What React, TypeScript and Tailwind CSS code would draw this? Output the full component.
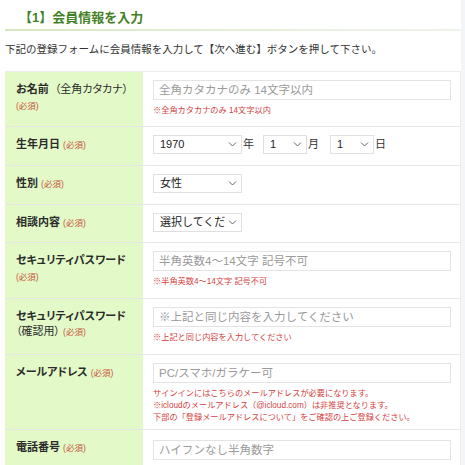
import React from 'react'

const font = { fontFamily: '"Liberation Sans", "Noto Sans CJK JP", sans-serif' }

function Req() {
  return <span className="text-[8.5px] font-normal text-[#c8553f]">(必須)</span>
}

function Hint({ children }: { children: React.ReactNode }) {
  return <p className="mt-[5px] text-[8.2px] leading-[12px] text-[#d33f3f]">{children}</p>
}

function TextInput({ placeholder }: { placeholder: string }) {
  return (
    <input
      type="text"
      placeholder={placeholder}
      className="block h-[20px] w-full border border-[#e3e3e3] bg-white px-[5px] text-[11.5px] text-[#333] placeholder:text-[#9a9a9a] outline-none"
    />
  )
}

function Select({ value, width }: { value: string; width: string }) {
  return (
    <div className={`relative h-[19px] ${width} border border-[#e0e0e0] bg-white`}>
      <div className="flex h-full w-[calc(100%-14px)] items-center overflow-hidden whitespace-nowrap pl-[6px] text-[11px] text-[#222]">
        {value}
      </div>
      <svg
        className="absolute right-[4px] top-[5px]"
        width="9"
        height="7"
        viewBox="0 0 9 7"
        fill="none"
        stroke="#666"
        strokeWidth="1"
      >
        <path d="M1 1.5 L4.5 5 L8 1.5" />
      </svg>
    </div>
  )
}

function Row({
  label,
  children,
  height,
}: {
  label: React.ReactNode
  children: React.ReactNode
  height: string
}) {
  return (
    <div className={`flex ${height} border-b border-[#e6e6e6]`}>
      <div className="w-[138px] shrink-0 bg-[#e3fac8] pl-[11px] pt-[10px] text-[11px] font-bold leading-[15px] text-[#2b2b2b] [font-feature-settings:'palt']">
        {label}
      </div>
      <div className="flex-1 pl-[10px] pr-[9px] pt-[8px]">{children}</div>
    </div>
  )
}

export default function App() {
  return (
    <div className="flex h-[465px] w-[465px] overflow-hidden bg-white" style={font}>
      <div className="w-[461px] pl-[5px]">
        {/* Title */}
        <div className="pt-[9px]">
          <h2 className="pl-[14px] text-[13px] font-bold leading-[18px] text-[#437f26]">【1】会員情報を入力</h2>
          <div className="mt-[2px] h-[2px] bg-gradient-to-r from-[#d6e6c2] via-[#e6eedb] to-[#eef2ea]" />
        </div>

        <p className="mt-[11px] text-[10.5px] leading-[14px] text-[#333]">
          下記の登録フォームに会員情報を入力して【次へ進む】ボタンを押して下さい。
        </p>

        {/* Form table */}
        <div className="mt-[15px] border-t border-r border-[#ececec]">
          <Row
            height="h-[55px]"
            label={
              <>
                <div>
                  お名前 <span className="font-normal">&nbsp;（全角カタカナ）</span>
                </div>
                <div className="mt-[1px]">
                  <Req />
                </div>
              </>
            }
          >
            <TextInput placeholder="全角カタカナのみ 14文字以内" />
            <Hint>※全角カタカナのみ 14文字以内</Hint>
          </Row>

          <Row
            height="h-[39px]"
            label={
              <>
                生年月日 <Req />
              </>
            }
          >
            <div className="flex items-center text-[11px] text-[#333]">
              <Select value="1970" width="w-[89px]" />
              <span className="ml-[1px] w-[20px]">年</span>
              <Select value="1" width="w-[44px]" />
              <span className="ml-[1px] w-[22px]">月</span>
              <Select value="1" width="w-[44px]" />
              <span className="ml-[1px]">日</span>
            </div>
          </Row>

          <Row
            height="h-[39px]"
            label={
              <>
                性別 <Req />
              </>
            }
          >
            <Select value="女性" width="w-[89px]" />
          </Row>

          <Row
            height="h-[38px]"
            label={
              <>
                相談内容 <Req />
              </>
            }
          >
            <Select value="選択してください" width="w-[89px]" />
          </Row>

          <Row
            height="h-[56px]"
            label={
              <>
                <div>セキュリティパスワード</div>
                <div className="mt-[1px]">
                  <Req />
                </div>
              </>
            }
          >
            <TextInput placeholder="半角英数4〜14文字 記号不可" />
            <Hint>※半角英数4〜14文字 記号不可</Hint>
          </Row>

          <Row
            height="h-[56px]"
            label={
              <>
                <div>セキュリティパスワード</div>
                <div>
                  <span className="font-normal">（確認用）</span> <Req />
                </div>
              </>
            }
          >
            <TextInput placeholder="※上記と同じ内容を入力してください" />
            <Hint>※上記と同じ内容を入力してください</Hint>
          </Row>

          <Row
            height="h-[75px]"
            label={
              <>
                メールアドレス <Req />
              </>
            }
          >
            <TextInput placeholder="PC/スマホ/ガラケー可" />
            <Hint>
              サインインにはこちらのメールアドレスが必要になります。
              <br />
              ※icloudのメールアドレス（@icloud.com）は非推奨となります。
              <br />
              下部の「登録メールアドレスについて」をご確認の上ご登録ください。
            </Hint>
          </Row>

          <Row
            height="h-[45px]"
            label={
              <>
                電話番号 <Req />
              </>
            }
          >
            <div className="pt-[2px]">
              <TextInput placeholder="ハイフンなし半角数字" />
            </div>
          </Row>
        </div>
      </div>
      <div className="flex-1 bg-[#f3f6f9]" />
    </div>
  )
}
